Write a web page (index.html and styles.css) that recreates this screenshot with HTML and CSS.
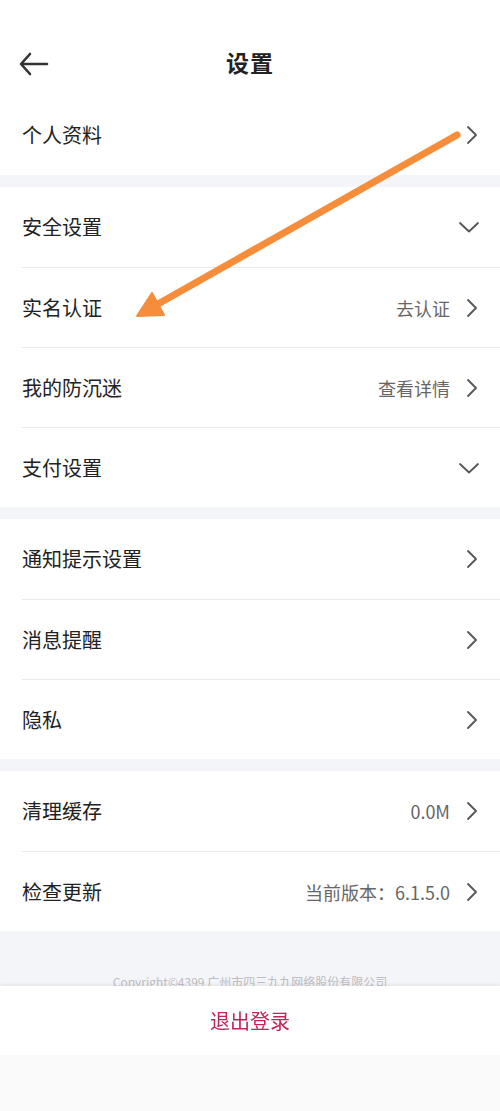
FILE: index.html
```html
<!DOCTYPE html>
<html lang="zh-CN">
<head>
<meta charset="utf-8">
<title>设置</title>
<link rel="stylesheet" href="styles.css">
</head>
<body>
<div class="page">
  <header class="topbar">
    <svg class="back" width="30" height="24" viewBox="0 0 30 24"><path d="M11 2 L2 12 L11 22 M2.5 12 H28" fill="none" stroke="#333" stroke-width="2.6" stroke-linecap="round" stroke-linejoin="round"/></svg>
    <h1 class="title">设置</h1>
  </header>

  <section class="group">
    <div class="row"><span class="label">个人资料</span><span class="right"><svg class="chev" width="12" height="20" viewBox="0 0 12 20"><path d="M2 2 L10 10 L2 18" fill="none" stroke="#555" stroke-width="1.8" stroke-linecap="round" stroke-linejoin="round"/></svg></span></div>
  </section>

  <section class="group">
    <div class="row"><span class="label">安全设置</span><span class="right"><svg class="down" width="22" height="12" viewBox="0 0 22 12"><path d="M2 2 L11 10.5 L20 2" fill="none" stroke="#555" stroke-width="1.8" stroke-linecap="round" stroke-linejoin="round"/></svg></span></div>
    <div class="row"><span class="label">实名认证</span><span class="right"><span class="value">去认证</span><svg class="chev" width="12" height="20" viewBox="0 0 12 20"><path d="M2 2 L10 10 L2 18" fill="none" stroke="#555" stroke-width="1.8" stroke-linecap="round" stroke-linejoin="round"/></svg></span></div>
    <div class="row"><span class="label">我的防沉迷</span><span class="right"><span class="value">查看详情</span><svg class="chev" width="12" height="20" viewBox="0 0 12 20"><path d="M2 2 L10 10 L2 18" fill="none" stroke="#555" stroke-width="1.8" stroke-linecap="round" stroke-linejoin="round"/></svg></span></div>
    <div class="row"><span class="label">支付设置</span><span class="right"><svg class="down" width="22" height="12" viewBox="0 0 22 12"><path d="M2 2 L11 10.5 L20 2" fill="none" stroke="#555" stroke-width="1.8" stroke-linecap="round" stroke-linejoin="round"/></svg></span></div>
  </section>

  <section class="group">
    <div class="row"><span class="label">通知提示设置</span><span class="right"><svg class="chev" width="12" height="20" viewBox="0 0 12 20"><path d="M2 2 L10 10 L2 18" fill="none" stroke="#555" stroke-width="1.8" stroke-linecap="round" stroke-linejoin="round"/></svg></span></div>
    <div class="row"><span class="label">消息提醒</span><span class="right"><svg class="chev" width="12" height="20" viewBox="0 0 12 20"><path d="M2 2 L10 10 L2 18" fill="none" stroke="#555" stroke-width="1.8" stroke-linecap="round" stroke-linejoin="round"/></svg></span></div>
    <div class="row"><span class="label">隐私</span><span class="right"><svg class="chev" width="12" height="20" viewBox="0 0 12 20"><path d="M2 2 L10 10 L2 18" fill="none" stroke="#555" stroke-width="1.8" stroke-linecap="round" stroke-linejoin="round"/></svg></span></div>
  </section>

  <section class="group">
    <div class="row"><span class="label">清理缓存</span><span class="right"><span class="value">0.0M</span><svg class="chev" width="12" height="20" viewBox="0 0 12 20"><path d="M2 2 L10 10 L2 18" fill="none" stroke="#555" stroke-width="1.8" stroke-linecap="round" stroke-linejoin="round"/></svg></span></div>
    <div class="row"><span class="label">检查更新</span><span class="right"><span class="value">当前版本：6.1.5.0</span><svg class="chev" width="12" height="20" viewBox="0 0 12 20"><path d="M2 2 L10 10 L2 18" fill="none" stroke="#555" stroke-width="1.8" stroke-linecap="round" stroke-linejoin="round"/></svg></span></div>
  </section>

  <p class="copyright">Copyright©4399 广州市四三九九网络股份有限公司</p>

  <footer class="bottom">
    <div class="logout">退出登录</div>
    <div class="navbar"></div>
  </footer>

  <svg class="annot" width="500" height="1111" viewBox="0 0 500 1111">
    <line x1="457" y1="135" x2="158" y2="304" stroke="#f68d3b" stroke-width="7" stroke-linecap="round"/>
    <polygon points="137,316 164,315 152,293" fill="#f68d3b" stroke="#f68d3b" stroke-width="2" stroke-linejoin="round"/>
  </svg>
</div>
</body>
</html>
```

FILE: styles.css
```css
* { box-sizing: border-box; }
html, body { margin: 0; padding: 0; }
body {
  background: #f4f5f8;
  font-family: "Noto Sans CJK SC", "Noto Sans", sans-serif;
  color: #222;
}
.page {
  position: relative;
  width: 500px;
  min-height: 1111px;
}
.topbar {
  position: relative;
  height: 95px;
  padding-top: 30px;
  background: #fff;
  display: flex;
  align-items: center;
  justify-content: center;
}
.back {
  position: absolute;
  left: 19px;
  top: 52px;
}
.title {
  margin: 0;
  font-size: 23px;
  font-weight: 700;
  color: #222;
  line-height: 1;
  letter-spacing: 1px;
}
.group {
  background: #fff;
  margin-bottom: 12px;
}
.row {
  height: 80px;
  margin-left: 22px;
  padding-right: 21px;
  display: flex;
  align-items: center;
  justify-content: space-between;
}
.row + .row {
  border-top: 1px solid #e9e9ec;
}
.label {
  font-size: 20px;
  color: #222;
  line-height: 1;
}
.right {
  display: flex;
  align-items: center;
  gap: 16px;
}
.value {
  font-size: 18px;
  color: #666;
  line-height: 1;
}
.chev { display: block; margin-right: 1px; }
.down { display: block; margin-right: -1px; }
.copyright {
  margin: 41px 0 0;
  text-align: center;
  font-size: 12px;
  color: #bdbdc2;
  line-height: 20px;
}
.bottom {
  position: fixed;
  left: 0;
  bottom: 0;
  width: 500px;
}
.logout {
  height: 69px;
  background: #fff;
  box-shadow: 0 -2px 3px rgba(0, 0, 0, 0.06);
  display: flex;
  align-items: center;
  justify-content: center;
  font-size: 20px;
  color: #c2245a;
}
.navbar {
  height: 56px;
  background: #fafafb;
}
.annot {
  position: absolute;
  left: 0;
  top: 0;
  pointer-events: none;
}
```
